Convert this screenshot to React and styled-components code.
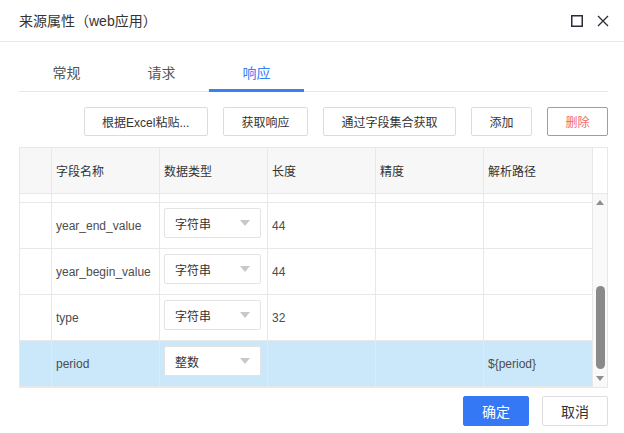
import React from 'react';
import styled, { createGlobalStyle } from 'styled-components';

const GlobalStyle = createGlobalStyle`
  html, body { margin: 0; padding: 0; background: #fff; }
  body { font-family: "Liberation Sans", "Noto Sans CJK SC", sans-serif; }
  * { box-sizing: border-box; }
`;

const Dialog = styled.div`
  width: 624px;
  height: 433px;
  background: #fff;
  display: flex;
  flex-direction: column;
  overflow: hidden;
`;

const Header = styled.div`
  height: 42px;
  display: flex;
  align-items: center;
  padding: 0 15px 1px 19px;
  border-bottom: 1px solid #e8e8e8;
`;

const Title = styled.div`
  flex: 1;
  font-size: 14px;
  color: #333;
`;

const HeaderIcons = styled.div`
  display: flex;
  align-items: center;
  gap: 14px;
  margin-top: 2px;
`;

const Body = styled.div`
  padding: 0 16px 0 19px;
  display: flex;
  flex-direction: column;
`;

const TabBar = styled.div`
  margin-top: 11px;
  display: flex;
  border-bottom: 1px solid #e6e6e6;
`;

const Tab = styled.div`
  position: relative;
  width: 95px;
  height: 38px;
  display: flex;
  align-items: center;
  justify-content: center;
  font-size: 14px;
  color: ${p => (p.$active ? '#3a80f5' : '#555')};
  &::after {
    content: '';
    display: ${p => (p.$active ? 'block' : 'none')};
    position: absolute;
    left: 0;
    right: 0;
    bottom: -1px;
    height: 3px;
    background: #3a80f5;
  }
`;

const Toolbar = styled.div`
  margin-top: 15px;
  display: flex;
  justify-content: flex-end;
  gap: 15px;
`;

const ToolButton = styled.button`
  height: 29px;
  padding: 0 17.5px;
  border: 1px solid ${p => (p.$danger ? '#f27b7b' : '#dcdcdc')};
  border-radius: 2px;
  background: #fff;
  color: ${p => (p.$danger ? '#f06a6a' : '#333')};
  font-family: inherit;
  font-size: 12px;
  cursor: pointer;
`;

const Table = styled.div`
  margin-top: 11px;
  width: 589px;
  border: 1px solid #e8e8e8;
  display: flex;
  flex-direction: column;
`;

const cols = '32px 108px 108px 108px 108px 109px';

const HeadRow = styled.div`
  display: grid;
  grid-template-columns: ${cols} 14px;
  height: 46px;
`;

const HeadCell = styled.div`
  display: flex;
  align-items: center;
  padding: 0 4px;
  font-size: 12px;
  color: #333;
  background: ${p => (p.$plain ? '#fff' : '#f7f7f7')};
  border-bottom: 1px solid #e8e8e8;
  border-right: ${p => (p.$plain ? 'none' : '1px solid #e8e8e8')};
`;

const BodyArea = styled.div`
  display: flex;
  height: 193px;
`;

const Rows = styled.div`
  display: flex;
  flex-direction: column;
`;

const Row = styled.div`
  display: grid;
  grid-template-columns: ${cols};
  height: ${p => p.$h}px;
  background: ${p => (p.$selected ? '#cbe8fb' : '#fff')};
`;

const Cell = styled.div`
  display: flex;
  align-items: center;
  padding: 0 4px;
  font-size: 12px;
  color: #4d4d4d;
  border-right: 1px solid #e8e8e8;
  border-bottom: 1px solid #e8e8e8;
  white-space: nowrap;
  overflow: hidden;
`;

const SelectCell = styled(Cell)`
  align-items: flex-start;
  padding-top: 5px;
`;

const Select = styled.div`
  width: 97px;
  height: 30px;
  border: 1px solid #e3e3e3;
  border-radius: 2px;
  background: #fff;
  display: flex;
  align-items: center;
  justify-content: space-between;
  padding: 0 10px 0 10px;
  font-size: 12px;
  color: #333;
`;

const Caret = styled.span`
  width: 0;
  height: 0;
  border-left: 5.5px solid transparent;
  border-right: 5.5px solid transparent;
  border-top: 6px solid #c8c8c8;
`;

const ScrollTrack = styled.div`
  width: 14px;
  background: #f9f9f9;
  display: flex;
  flex-direction: column;
  align-items: center;
`;

const ScrollArrow = styled.div`
  height: 17px;
  display: flex;
  align-items: center;
  justify-content: center;
  &::before {
    content: '';
    width: 0;
    height: 0;
    border-left: 4.5px solid transparent;
    border-right: 4.5px solid transparent;
    ${p => (p.$up ? 'border-bottom: 5px solid #8f8f8f;' : 'border-top: 5px solid #8f8f8f;')}
  }
`;

const Thumb = styled.div`
  margin-top: auto;
  margin-bottom: 1px;
  margin-left: 1px;
  width: 9px;
  height: 83px;
  border-radius: 5px;
  background: #8a8a8a;
`;

const Footer = styled.div`
  margin-top: 8px;
  display: flex;
  justify-content: flex-end;
  gap: 13px;
`;

const FooterButton = styled.button`
  width: 66px;
  height: 30px;
  border-radius: 2px;
  border: 1px solid ${p => (p.$primary ? '#3478f6' : '#dedede')};
  background: ${p => (p.$primary ? '#3478f6' : '#fff')};
  color: ${p => (p.$primary ? '#fff' : '#333')};
  font-family: inherit;
  font-size: 14px;
  cursor: pointer;
`;

const MaxIcon = () => (
  <svg width="12" height="12" viewBox="0 0 12 12">
    <rect x="0.75" y="0.75" width="10.5" height="10.5" fill="none" stroke="#2b2b36" strokeWidth="1.5" />
  </svg>
);

const CloseIcon = () => (
  <svg width="12" height="12" viewBox="0 0 12 12">
    <path d="M1 1 L11 11 M11 1 L1 11" stroke="#2b2b36" strokeWidth="1.3" fill="none" />
  </svg>
);

const rows = [
  { name: 'year_end_value', type: '字符串', len: '44', prec: '', path: '' },
  { name: 'year_begin_value', type: '字符串', len: '44', prec: '', path: '' },
  { name: 'type', type: '字符串', len: '32', prec: '', path: '' },
  { name: 'period', type: '整数', len: '', prec: '', path: '${period}', selected: true },
];

export default function App() {
  return (
    <>
      <GlobalStyle />
      <Dialog>
        <Header>
          <Title>来源属性（web应用）</Title>
          <HeaderIcons>
            <MaxIcon />
            <CloseIcon />
          </HeaderIcons>
        </Header>
        <Body>
          <TabBar>
            <Tab>常规</Tab>
            <Tab>请求</Tab>
            <Tab $active>响应</Tab>
          </TabBar>
          <Toolbar>
            <ToolButton>根据Excel粘贴...</ToolButton>
            <ToolButton>获取响应</ToolButton>
            <ToolButton>通过字段集合获取</ToolButton>
            <ToolButton>添加</ToolButton>
            <ToolButton $danger>删除</ToolButton>
          </Toolbar>
          <Table>
            <HeadRow>
              <HeadCell />
              <HeadCell>字段名称</HeadCell>
              <HeadCell>数据类型</HeadCell>
              <HeadCell>长度</HeadCell>
              <HeadCell>精度</HeadCell>
              <HeadCell>解析路径</HeadCell>
              <HeadCell $plain />
            </HeadRow>
            <BodyArea>
              <Rows>
                <Row $h={9}>
                  <Cell /><Cell /><Cell /><Cell /><Cell /><Cell />
                </Row>
                {rows.map(r => (
                  <Row key={r.name} $h={46} $selected={r.selected}>
                    <Cell />
                    <Cell>{r.name}</Cell>
                    <SelectCell>
                      <Select>
                        <span>{r.type}</span>
                        <Caret />
                      </Select>
                    </SelectCell>
                    <Cell>{r.len}</Cell>
                    <Cell>{r.prec}</Cell>
                    <Cell>{r.path}</Cell>
                  </Row>
                ))}
              </Rows>
              <ScrollTrack>
                <ScrollArrow $up />
                <Thumb />
                <ScrollArrow />
              </ScrollTrack>
            </BodyArea>
          </Table>
          <Footer>
            <FooterButton $primary>确定</FooterButton>
            <FooterButton>取消</FooterButton>
          </Footer>
        </Body>
      </Dialog>
    </>
  );
}
